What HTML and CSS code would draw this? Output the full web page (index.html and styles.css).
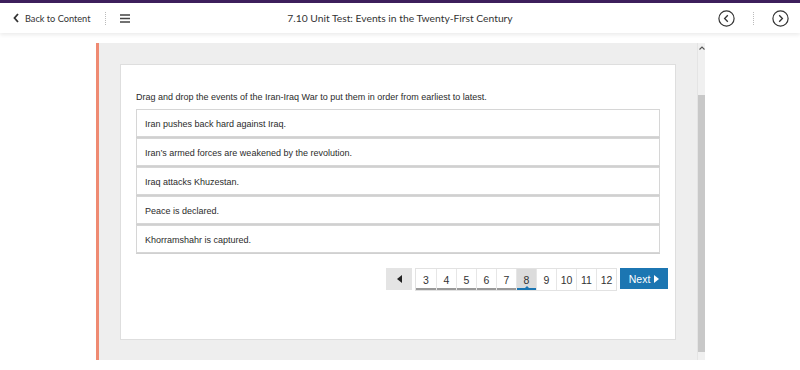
FILE: index.html
```html
<!DOCTYPE html>
<html lang="en">
<head>
  <meta charset="UTF-8" />
  <title>7.10 Unit Test: Events in the Twenty-First Century</title>
  <link rel="stylesheet" href="styles.css">
</head>
<body>
  <header class="topbar">
    <div class="topbar-left">
      <a class="back-link" href="#">
        <svg class="chev" width="6" height="10" viewBox="0 0 6 10"><path d="M5 1 L1.5 5 L5 9" fill="none" stroke="#333" stroke-width="1.8"/></svg>
        Back to Content
      </a>
      <span class="sep"></span>
      <svg class="menu" width="10" height="9" viewBox="0 0 10 9"><path d="M0 1h10M0 4.5h10M0 8h10" stroke="#444" stroke-width="1.3"/></svg>
    </div>
    <div class="title">7.10 Unit Test: Events in the Twenty-First Century</div>
    <div class="topbar-right">
      <svg class="circ" width="17" height="17" viewBox="0 0 17 17"><circle cx="8.5" cy="8.5" r="7.6" fill="none" stroke="#333" stroke-width="1.2"/><path d="M9.8 5.2 L6.6 8.5 L9.8 11.8" fill="none" stroke="#333" stroke-width="1.3"/></svg>
      <span class="sep"></span>
      <svg class="circ" width="17" height="17" viewBox="0 0 17 17"><circle cx="8.5" cy="8.5" r="7.6" fill="none" stroke="#333" stroke-width="1.2"/><path d="M7.2 5.2 L10.4 8.5 L7.2 11.8" fill="none" stroke="#333" stroke-width="1.3"/></svg>
    </div>
  </header>

  <main class="stage">
    <div class="panel">
      <div class="panel-body">
        <div class="card">
          <p class="prompt">Drag and drop the events of the Iran-Iraq War to put them in order from earliest to latest.</p>
          <ul class="items">
            <li>Iran pushes back hard against Iraq.</li>
            <li>Iran’s armed forces are weakened by the revolution.</li>
            <li>Iraq attacks Khuzestan.</li>
            <li>Peace is declared.</li>
            <li>Khorramshahr is captured.</li>
          </ul>
          <div class="pager">
            <button class="prev"><span class="tri-left"></span></button>
            <div class="pages">
              <span class="done">3</span>
              <span class="done">4</span>
              <span class="done">5</span>
              <span class="done">6</span>
              <span class="done">7</span>
              <span class="current">8</span>
              <span>9</span>
              <span>10</span>
              <span>11</span>
              <span>12</span>
            </div>
            <button class="next">Next <span class="tri-right"></span></button>
          </div>
        </div>
      </div>
      <div class="scrollbar">
        <div class="scroll-top">
          <svg width="6" height="4" viewBox="0 0 6 4"><path d="M0.5 3.5 L3 1 L5.5 3.5" fill="none" stroke="#555" stroke-width="1.1"/></svg>
        </div>
        <div class="thumb"></div>
        <div class="scroll-bottom">
          <svg width="6" height="4" viewBox="0 0 6 4"><path d="M0.5 0.5 L3 3 L5.5 0.5" fill="none" stroke="#555" stroke-width="1.1"/></svg>
        </div>
      </div>
    </div>
  </main>
</body>
</html>
```

FILE: styles.css
```css
* {
  box-sizing: border-box;
}

body {
  margin: 0;
  background: #fff;
  font-family: 'Liberation Sans', Arial, sans-serif;
  color: #2b2b2b;
}

.topbar {
  height: 33px;
  border-top: 3px solid #3d1f5c;
  background: #fff;
  box-shadow: 0 2px 4px rgba(0, 0, 0, 0.08);
  display: grid;
  grid-template-columns: 1fr auto 1fr;
  align-items: center;
  font-family: Lato, sans-serif;
  font-size: 9.2px;
  color: #333;
}

.topbar-left {
  display: flex;
  align-items: center;
  padding-left: 13px;
}

.back-link {
  display: flex;
  align-items: center;
  gap: 6px;
  color: #333;
  text-decoration: none;
}

.sep {
  display: inline-block;
  height: 13px;
  border-left: 1px dotted #bbb;
  margin: 0 14px 0 15px;
}

.title {
  font-size: 10.3px;
}

.topbar-right {
  display: flex;
  align-items: center;
  justify-content: flex-end;
  padding-right: 11px;
}

.topbar-right .sep {
  margin: 0 18px 0 18px;
}

.circ {
  display: block;
}

.stage {
  padding: 10px 0 0 96px;
}

.panel {
  width: 609px;
  height: 317px;
  border-left: 3px solid #ef8a72;
  background: #eeeeee;
  display: flex;
}

.panel-body {
  flex: 1;
  padding: 21px;
}

.card {
  height: 276px;
  background: #fff;
  border: 1px solid #dedede;
  padding: 27px 15px;
}

.prompt {
  margin: 0 0 6px;
  font-size: 9px;
  line-height: 11px;
}

.items {
  list-style: none;
  margin: 0;
  padding: 0;
}

.items li {
  height: 28px;
  margin-bottom: 1px;
  border: 1px solid #d6d6d6;
  box-shadow: 0 1px 0 #d0d0d0;
  padding: 1px 8px 0;
  display: flex;
  align-items: center;
  font-size: 9px;
}

.pager {
  display: flex;
  justify-content: flex-end;
  align-items: flex-start;
  gap: 3px;
  margin: 15px -8px 0 0;
}

.pager button {
  border: none;
  font-family: inherit;
  cursor: pointer;
}

.prev {
  width: 26px;
  height: 22px;
  background: #e4e4e4;
  display: flex;
  align-items: center;
  justify-content: center;
}

.tri-left {
  width: 0;
  height: 0;
  border-top: 4px solid transparent;
  border-bottom: 4px solid transparent;
  border-right: 5px solid #222;
}

.pages {
  display: flex;
  border: 1px solid #e2e2e2;
}

.pages span {
  width: 20px;
  height: 21px;
  display: flex;
  align-items: center;
  justify-content: center;
  font-size: 10.5px;
  color: #333;
  border-left: 1px solid #e6e6e6;
  position: relative;
}

.pages span:first-child {
  border-left: none;
}

.pages .done {
  box-shadow: inset 0 -2px 0 #9a9a9a;
}

.pages .current {
  background: #dcdcdc;
  box-shadow: inset 0 -2px 0 #1c76b2;
}

.pages .current::after {
  content: "";
  position: absolute;
  bottom: 2px;
  left: 8px;
  border-left: 2px solid transparent;
  border-right: 2px solid transparent;
  border-bottom: 2px solid #1c76b2;
}

.next {
  width: 48px;
  height: 21px;
  background: #1c76b2;
  color: #fff;
  font-size: 10.5px;
  display: flex;
  align-items: center;
  justify-content: center;
  gap: 4px;
}

.tri-right {
  width: 0;
  height: 0;
  border-top: 4px solid transparent;
  border-bottom: 4px solid transparent;
  border-left: 5px solid #fff;
}

.scrollbar {
  width: 8px;
  display: flex;
  flex-direction: column;
  border-left: 1px solid #e4e4e4;
  background: #f0f0f0;
}

.scroll-top {
  height: 52px;
  display: flex;
  justify-content: center;
  padding-top: 3px;
}

.thumb {
  height: 257px;
  background: #c8c8c8;
}

.scroll-bottom {
  flex: 1;
  display: flex;
  justify-content: center;
  align-items: flex-end;
  margin-bottom: -4px;
}

.scroll-bottom svg,
.scroll-top svg {
  display: block;
}
```
